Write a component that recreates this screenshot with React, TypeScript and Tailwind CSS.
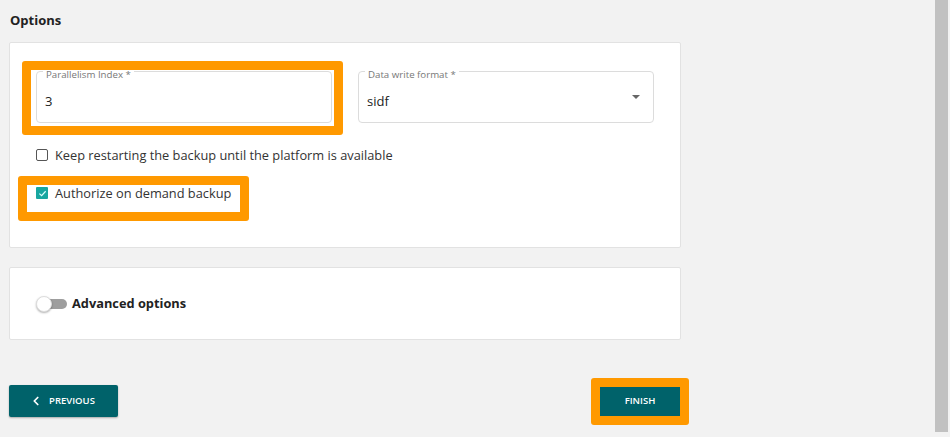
import { ChevronLeft } from "lucide-react";

const font = { fontFamily: '"Open Sans", "Noto Sans", sans-serif' };

function Field({ label, value, select = false }: { label: string; value: string; select?: boolean }) {
  return (
    <div className="relative w-[296px] h-[52px] rounded-[4px] border border-[#dcdcdc] bg-white">
      <span className="absolute -top-[2px] left-[6px] bg-white px-[3px] text-[9.7px] leading-[10px] text-[#777]">
        {label}
      </span>
      <div className="pt-[20px] pl-[8px] text-[13px] leading-[18px] text-[#222]">{value}</div>
      {select && (
        <div className="absolute right-[13px] top-[23px] w-0 h-0 border-l-[4px] border-r-[4px] border-t-[4px] border-l-transparent border-r-transparent border-t-[#666]" />
      )}
    </div>
  );
}

function Checkbox({ label, checked = false }: { label: string; checked?: boolean }) {
  return (
    <label className="flex items-center gap-[7px] text-[12.8px] leading-[18px] text-[#333]">
      {checked ? (
        <span className="flex w-[12px] h-[12px] items-center justify-center rounded-[1px] bg-[#17a6a0]">
          <svg width="9" height="9" viewBox="0 0 10 10" fill="none">
            <path d="M1.5 5.2 4 7.5 8.5 2.5" stroke="#dff" strokeWidth="1.3" />
          </svg>
        </span>
      ) : (
        <span className="w-[12px] h-[12px] rounded-[2px] border border-[#555] bg-white" />
      )}
      {label}
    </label>
  );
}

export default function App() {
  return (
    <div className="w-[950px] h-[437px] bg-[#f2f2f2] flex overflow-hidden" style={font}>
      <div className="w-[935px] pl-[9px]">
        <h2 className="pt-[11px] pl-px text-[13px] font-bold leading-[18px] text-[#222]">Options</h2>

        {/* main options card */}
        <div className="relative mt-[13px] w-[672px] h-[206px] rounded-[2px] border border-[#e2e2e2] bg-white">
          <div className="flex gap-[26px] pl-[26px] pt-[28px]">
            <Field label="Parallelism Index *" value="3" />
            <Field label="Data write format *" value="sidf" select />
          </div>
          <div className="flex flex-col gap-[20px] pl-[26px] pt-[23px]">
            <Checkbox label="Keep restarting the backup until the platform is available" />
            <Checkbox label="Authorize on demand backup" checked />
          </div>

          {/* highlight frames */}
          <div className="absolute left-[12px] top-[18px] w-[321px] h-[74px] rounded-[3px] border-[9px] border-[#ff9900]" />
          <div className="absolute left-[8px] top-[133px] w-[231px] h-[45px] rounded-[3px] border-[9px] border-[#ff9900]" />
        </div>

        {/* advanced options */}
        <div className="mt-[19px] flex h-[73px] w-[672px] items-center gap-[4px] rounded-[2px] border border-[#e2e2e2] bg-white pl-[26px] pt-[1px]">
          <div className="relative h-[16px] w-[32px]">
            <div className="absolute left-[5px] top-[3px] h-[10px] w-[26px] rounded-full bg-[#9e9e9e]" />
            <div className="absolute left-0 top-0 h-[16px] w-[16px] rounded-full border border-[#ddd] bg-white shadow-[0_1px_2px_rgba(0,0,0,0.3)]" />
          </div>
          <span className="text-[12.8px] font-bold text-[#222]">Advanced options</span>
        </div>

        {/* navigation */}
        <div className="mt-[45px] flex w-[680px] items-start justify-between">
          <button className="flex h-[32px] w-[109px] items-center justify-center gap-[6px] rounded-[2px] bg-[#00626a] pr-[3px] text-[9.5px] font-semibold text-white shadow-[0_1px_2px_rgba(0,0,0,0.3)]">
            <ChevronLeft size={14} strokeWidth={3} />
            PREVIOUS
          </button>
          <div className="-mt-[7px] rounded-[3px] border-[9px] border-[#ff9900] bg-[#f2f2f2]">
            <button className="flex h-[29px] w-[80px] items-center justify-center bg-[#00626a] text-[9.5px] font-semibold text-white">
              FINISH
            </button>
          </div>
        </div>
      </div>

      {/* scrollbar */}
      <div className="w-[13px] h-[432px] bg-[#c1c1c1]" />
    </div>
  );
}
